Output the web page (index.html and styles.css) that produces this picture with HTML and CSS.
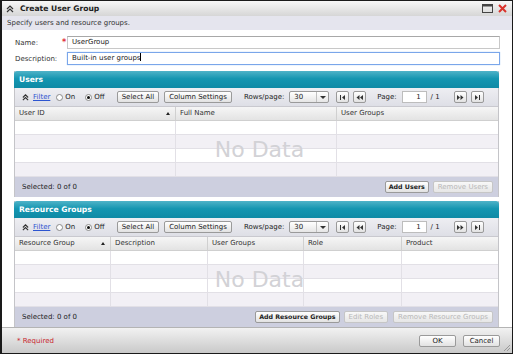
FILE: index.html
```html
<!DOCTYPE html>
<html>
<head>
    <link rel="stylesheet" href="styles.css">
</head>
<body>
    <div class="dialog">
        <div class="title-bar">
            <svg class="title-icon" width="8" height="8" viewBox="0 0 8 8"><path d="M1 4 L4 1 L7 4 M1 7 L4 4 L7 7" fill="none" stroke="#333" stroke-width="1.2"/></svg>
            <span class="title-text">Create User Group</span>
            <span class="title-tools">
                <svg width="11" height="9" viewBox="0 0 11 9"><rect x="0.5" y="0.5" width="10" height="8" fill="none" stroke="#444"/><rect x="0.5" y="0.5" width="10" height="2" fill="#444"/></svg>
                <svg width="9" height="9" viewBox="0 0 9 9"><path d="M1 1 L8 8 M8 1 L1 8" stroke="#d9322b" stroke-width="2"/></svg>
            </span>
        </div>
        <div class="subtitle">Specify users and resource groups.</div>

        <div class="form">
            <div class="form-row">
                <span class="form-label">Name:</span>
                <span class="req-dot">*</span>
                <div class="text-input">UserGroup</div>
            </div>
            <div class="form-row">
                <span class="form-label">Description:</span>
                <span class="req-dot"></span>
                <div class="text-input focused">Built-in user groups<span class="caret"></span></div>
            </div>
        </div>

        <!-- Users -->
        <div class="panel">
            <div class="panel-header">Users</div>
            <div class="toolbar">
                <svg class="chevrons" width="7" height="7" viewBox="0 0 8 8"><path d="M1 4 L4 1 L7 4 M1 7 L4 4 L7 7" fill="none" stroke="#333" stroke-width="1.3"/></svg>
                <a class="filter-link">Filter</a>
                <span class="radio"></span><span class="radio-label">On</span>
                <span class="radio checked"></span><span class="radio-label">Off</span>
                <button class="btn select-all">Select All</button>
                <button class="btn">Column Settings</button>
                <span class="rows-label">Rows/page:</span>
                <div class="select"><span class="select-value">30</span><span class="select-arrow"></span></div>
                <button class="pager-btn"><svg width="7" height="5" viewBox="0 0 7 5"><rect x="1" y="0" width="1" height="5" fill="#333"/><path d="M6 0 L3 2.5 L6 5 Z" fill="#333"/></svg></button>
                <button class="pager-btn"><svg width="7" height="5" viewBox="0 0 7 5"><path d="M3.5 0 L0.5 2.5 L3.5 5 Z M7 0 L4 2.5 L7 5 Z" fill="#333"/></svg></button>
                <span class="page-label">Page:</span>
                <div class="page-input">1</div>
                <span class="page-total">/ 1</span>
                <button class="pager-btn next"><svg width="7" height="5" viewBox="0 0 7 5"><path d="M0 0 L3 2.5 L0 5 Z M3.5 0 L6.5 2.5 L3.5 5 Z" fill="#333"/></svg></button>
                <button class="pager-btn"><svg width="7" height="5" viewBox="0 0 7 5"><path d="M1 0 L4 2.5 L1 5 Z" fill="#333"/><rect x="5" y="0" width="1" height="5" fill="#333"/></svg></button>
            </div>
            <div class="grid users-cols col-head">
                <div class="cell">User ID<span class="sort-arrow"></span></div>
                <div class="cell">Full Name</div>
                <div class="cell">User Groups</div>
            </div>
            <div class="grid-body">
                <div class="grid users-cols row"><div class="cell"></div><div class="cell"></div><div class="cell"></div></div>
                <div class="grid users-cols row alt"><div class="cell"></div><div class="cell"></div><div class="cell"></div></div>
                <div class="grid users-cols row"><div class="cell"></div><div class="cell"></div><div class="cell"></div></div>
                <div class="grid users-cols row alt"><div class="cell"></div><div class="cell"></div><div class="cell"></div></div>
                <div class="no-data">No Data</div>
            </div>
            <div class="panel-footer">
                <span class="selected">Selected: 0 of 0</span>
                <button class="btn strong">Add Users</button>
                <button class="btn" disabled>Remove Users</button>
            </div>
        </div>

        <!-- Resource Groups -->
        <div class="panel second">
            <div class="panel-header">Resource Groups</div>
            <div class="toolbar">
                <svg class="chevrons" width="7" height="7" viewBox="0 0 8 8"><path d="M1 4 L4 1 L7 4 M1 7 L4 4 L7 7" fill="none" stroke="#333" stroke-width="1.3"/></svg>
                <a class="filter-link">Filter</a>
                <span class="radio"></span><span class="radio-label">On</span>
                <span class="radio checked"></span><span class="radio-label">Off</span>
                <button class="btn select-all">Select All</button>
                <button class="btn">Column Settings</button>
                <span class="rows-label">Rows/page:</span>
                <div class="select"><span class="select-value">30</span><span class="select-arrow"></span></div>
                <button class="pager-btn"><svg width="7" height="5" viewBox="0 0 7 5"><rect x="1" y="0" width="1" height="5" fill="#333"/><path d="M6 0 L3 2.5 L6 5 Z" fill="#333"/></svg></button>
                <button class="pager-btn"><svg width="7" height="5" viewBox="0 0 7 5"><path d="M3.5 0 L0.5 2.5 L3.5 5 Z M7 0 L4 2.5 L7 5 Z" fill="#333"/></svg></button>
                <span class="page-label">Page:</span>
                <div class="page-input">1</div>
                <span class="page-total">/ 1</span>
                <button class="pager-btn next"><svg width="7" height="5" viewBox="0 0 7 5"><path d="M0 0 L3 2.5 L0 5 Z M3.5 0 L6.5 2.5 L3.5 5 Z" fill="#333"/></svg></button>
                <button class="pager-btn"><svg width="7" height="5" viewBox="0 0 7 5"><path d="M1 0 L4 2.5 L1 5 Z" fill="#333"/><rect x="5" y="0" width="1" height="5" fill="#333"/></svg></button>
            </div>
            <div class="grid res-cols col-head">
                <div class="cell">Resource Group<span class="sort-arrow"></span></div>
                <div class="cell">Description</div>
                <div class="cell">User Groups</div>
                <div class="cell">Role</div>
                <div class="cell">Product</div>
            </div>
            <div class="grid-body">
                <div class="grid res-cols row"><div class="cell"></div><div class="cell"></div><div class="cell"></div><div class="cell"></div><div class="cell"></div></div>
                <div class="grid res-cols row alt"><div class="cell"></div><div class="cell"></div><div class="cell"></div><div class="cell"></div><div class="cell"></div></div>
                <div class="grid res-cols row"><div class="cell"></div><div class="cell"></div><div class="cell"></div><div class="cell"></div><div class="cell"></div></div>
                <div class="grid res-cols row alt"><div class="cell"></div><div class="cell"></div><div class="cell"></div><div class="cell"></div><div class="cell"></div></div>
                <div class="no-data">No Data</div>
            </div>
            <div class="panel-footer">
                <span class="selected">Selected: 0 of 0</span>
                <button class="btn strong">Add Resource Groups</button>
                <button class="btn" disabled>Edit Roles</button>
                <button class="btn" disabled>Remove Resource Groups</button>
            </div>
        </div>

        <div class="dialog-footer">
            <span class="required">* Required</span>
            <button class="btn wide">OK</button>
            <button class="btn wide">Cancel</button>
            <svg class="grip" width="7" height="7" viewBox="0 0 7 7"><path d="M7 1 L1 7 M7 4 L4 7" stroke="#999" stroke-width="1"/></svg>
        </div>
    </div>
</body>
</html>
```

FILE: styles.css
```css
body {
    margin: 0;
    background: #fff;
    font-family: "DejaVu Sans", Verdana, sans-serif;
    font-size: 7px;
    color: #222;
}
.dialog {
    position: relative;
    box-sizing: border-box;
    width: 513px;
    height: 354px;
    border: 1px solid #1a1a1a;
    border-left-width: 2px;
    background: #fff;
    display: flex;
    flex-direction: column;
}
.title-bar {
    height: 15px;
    display: flex;
    align-items: center;
    padding-left: 4px;
    background: linear-gradient(#f7f7f7, #d6d6d6);
}
.title-icon {
    margin-right: 6px;
}
.title-text {
    font-weight: bold;
    font-size: 7.6px;
    color: #1e1e1e;
}
.title-tools {
    margin-left: auto;
    margin-right: 5px;
    display: flex;
    gap: 5px;
    align-items: center;
}
.subtitle {
    height: 14px;
    line-height: 14px;
    padding-left: 5px;
    background: #e5e5ee;
    color: #333;
}
.form {
    padding: 6px 12px 0 13px;
    display: flex;
    flex-direction: column;
    gap: 3px;
}
.form-row {
    display: flex;
    align-items: center;
    height: 13px;
}
.form-label {
    width: 47px;
    color: #333;
}
.req-dot {
    width: 5px;
    color: #e0303a;
    font-weight: bold;
    font-size: 8px;
    line-height: 8px;
}
.text-input {
    flex: 1;
    box-sizing: border-box;
    height: 13px;
    line-height: 11px;
    padding-left: 4px;
    border: 1px solid #c8c8c8;
    border-top-color: #a8a8a8;
    color: #222;
}
.text-input.focused {
    border-color: #7aa6ea;
    box-shadow: 0 0 1px #9cc0f2;
}
.caret {
    display: inline-block;
    width: 1px;
    height: 8px;
    background: #000;
    vertical-align: -1px;
}
.panel {
    margin: 6px 13px 0 12px;
    height: 126px;
    display: flex;
    flex-direction: column;
    border-left: 1px solid #c4c4c8;
    border-right: 1px solid #c4c4c8;
}
.panel.second {
    margin-top: 4px;
}
.panel-header {
    height: 17px;
    line-height: 17px;
    padding-left: 5px;
    margin: 0 -1px;
    border-radius: 3px 3px 0 0;
    background: linear-gradient(#4fb3c8, #1596b1 45%, #0f8aa5);
    color: #fff;
    font-weight: bold;
    font-size: 7.6px;
}
.toolbar {
    height: 19px;
    display: flex;
    align-items: center;
    padding-left: 7px;
    background: linear-gradient(#eeeef2, #dedfe6);
    border-bottom: 1px solid #c9c9cf;
    box-sizing: border-box;
}
.chevrons {
    margin-right: 4px;
}
.filter-link {
    color: #2d55d0;
    text-decoration: underline;
    margin-right: 6px;
}
.radio {
    box-sizing: border-box;
    width: 7px;
    height: 7px;
    border-radius: 50%;
    border: 1px solid #8a8a8a;
    background: #fff;
    display: inline-flex;
    align-items: center;
    justify-content: center;
    margin-right: 2px;
}
.radio.checked::after {
    content: "";
    width: 3px;
    height: 3px;
    border-radius: 50%;
    background: #111;
}
.radio-label {
    margin-right: 10px;
}
.btn {
    box-sizing: border-box;
    height: 12px;
    padding: 0 4px;
    border: 1px solid #9a9a9a;
    border-radius: 2px;
    background: linear-gradient(#ffffff, #e2e2e2);
    font-family: "DejaVu Sans", Verdana, sans-serif;
    font-size: 7px;
    line-height: 10px;
    color: #222;
    margin-right: 5px;
}
.btn:disabled {
    color: #b8b8b8;
    border-color: #c6c6c6;
    background: linear-gradient(#f8f8f8, #e6e6e6);
}
.btn.strong {
    font-weight: bold;
    font-size: 6.3px;
    padding: 0 3px;
    margin-right: 4px;
}
.btn.select-all {
    margin-left: 2px;
}
.btn.wide {
    width: 37px;
    margin-right: 0;
    margin-left: 7px;
}
.rows-label {
    margin-left: 7px;
    margin-right: 5px;
}
.select {
    box-sizing: border-box;
    width: 40px;
    height: 12px;
    border: 1px solid #9a9a9a;
    border-radius: 2px;
    background: linear-gradient(#ffffff, #e6e6e6);
    display: flex;
    align-items: center;
    margin-right: 7px;
}
.select-value {
    flex: 1;
    padding-left: 4px;
    border-right: 1px solid #c0c0c0;
    line-height: 10px;
}
.select-arrow {
    width: 11px;
    height: 10px;
    position: relative;
}
.select-arrow::after {
    content: "";
    position: absolute;
    left: 3px;
    top: 4px;
    border-left: 3px solid transparent;
    border-right: 3px solid transparent;
    border-top: 3px solid #333;
}
.pager-btn {
    box-sizing: border-box;
    width: 13px;
    height: 12px;
    padding: 0;
    border: 1px solid #9a9a9a;
    border-radius: 2px;
    background: linear-gradient(#ffffff, #e2e2e2);
    display: flex;
    align-items: center;
    justify-content: center;
    margin-right: 4px;
}
.pager-btn.next {
    margin-left: 14px;
}
.page-label {
    margin-left: 7px;
    margin-right: 5px;
}
.page-input {
    box-sizing: border-box;
    width: 25px;
    height: 12px;
    border: 1px solid #bdbdbd;
    background: #fff;
    text-align: right;
    padding-right: 5px;
    line-height: 10px;
    margin-right: 4px;
}
.grid {
    display: grid;
    box-sizing: border-box;
}
.users-cols {
    grid-template-columns: 161px 161px 1fr;
}
.res-cols {
    grid-template-columns: 96px 97px 96px 98px 1fr;
}
.col-head {
    height: 14px;
    background: linear-gradient(#f6f6f6, #e3e3e3);
    border-bottom: 1px solid #cfcfcf;
}
.col-head .cell {
    position: relative;
    line-height: 13px;
    padding-left: 4px;
    border-right: 1px solid #d0d0d0;
    color: #333;
}
.cell:last-child {
    border-right: none !important;
}
.sort-arrow {
    position: absolute;
    right: 5px;
    top: 5px;
    border-left: 2px solid transparent;
    border-right: 2px solid transparent;
    border-bottom: 3px solid #222;
}
.grid-body {
    position: relative;
}
.row {
    height: 14px;
    background: #fff;
    border-bottom: 1px solid #e2e0e6;
}
.row.alt {
    background: #f2f0f5;
}
.row .cell {
    border-right: 1px solid #e2e0e6;
}
.no-data {
    position: absolute;
    inset: 0;
    display: flex;
    align-items: center;
    justify-content: center;
    font-size: 22px;
    color: #d2d2d6;
    padding-left: 6px;
}
.panel-footer {
    flex: 1;
    display: flex;
    align-items: center;
    padding-left: 7px;
    background: #cdcfdf;
}
.panel-footer .btn:last-child {
    margin-right: 5px;
}
.selected {
    margin-right: auto;
}
.dialog-footer {
    position: relative;
    margin-top: auto;
    height: 26px;
    box-sizing: border-box;
    border-top: 1px solid #b4b4b4;
    background: linear-gradient(#f2f2f2, #c9c9c9);
    display: flex;
    align-items: center;
    padding: 0 12px 0 15px;
}
.required {
    color: #c8262e;
    margin-right: auto;
}
.grip {
    position: absolute;
    right: 2px;
    bottom: 2px;
}
```
